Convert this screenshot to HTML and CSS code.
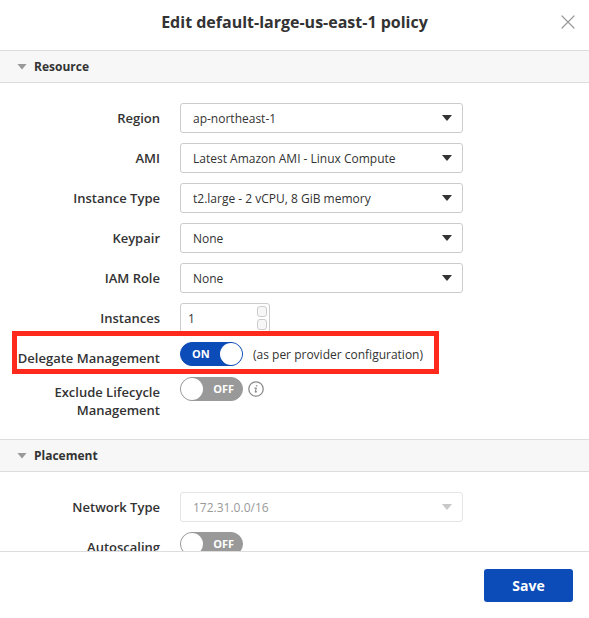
FILE: index.html
```html
<!DOCTYPE html>
<html lang="en">
<head>
<meta charset="utf-8">
<meta name="viewport" content="width=device-width, initial-scale=1">
<title>Edit policy</title>
<link rel="stylesheet" href="styles.css">
</head>
<body>
<form class="dialog">
  <header class="dialog-header">
    <h1 class="dialog-title">Edit default-large-us-east-1 policy</h1>
    <button class="close" type="button" aria-label="Close">
      <svg width="14" height="14" viewBox="0 0 14 14" fill="none" stroke="#999" stroke-width="1.2" stroke-linecap="round"><path d="M1 1l12 12M13 1L1 13"/></svg>
    </button>
  </header>

  <main class="dialog-body">
    <section>
      <h2 class="section-title"><span class="caret"></span>Resource</h2>
      <div class="fields">
        <div class="row">
          <label class="label" for="region">Region</label>
          <div class="select"><select id="region"><option>ap-northeast-1</option></select><span class="arrow"></span></div>
        </div>
        <div class="row">
          <label class="label" for="ami">AMI</label>
          <div class="select"><select id="ami"><option>Latest Amazon AMI - Linux Compute</option></select><span class="arrow"></span></div>
        </div>
        <div class="row">
          <label class="label" for="type">Instance Type</label>
          <div class="select"><select id="type"><option>t2.large - 2 vCPU, 8 GiB memory</option></select><span class="arrow"></span></div>
        </div>
        <div class="row">
          <label class="label" for="keypair">Keypair</label>
          <div class="select"><select id="keypair"><option>None</option></select><span class="arrow"></span></div>
        </div>
        <div class="row">
          <label class="label" for="role">IAM Role</label>
          <div class="select"><select id="role"><option>None</option></select><span class="arrow"></span></div>
        </div>
        <div class="row">
          <label class="label" for="instances">Instances</label>
          <div class="stepper">
            <input id="instances" type="text" inputmode="numeric" value="1">
            <div class="steps">
              <button type="button" aria-label="Increase"></button>
              <button type="button" aria-label="Decrease"></button>
            </div>
          </div>
        </div>
        <div class="row row-highlight">
          <label class="label" for="delegate">Delegate Management</label>
          <div class="control">
            <label class="toggle"><input id="delegate" type="checkbox" checked><span class="state">ON</span></label>
            <span class="note">(as per provider configuration)</span>
          </div>
        </div>
        <div class="row">
          <label class="label" for="lifecycle">Exclude Lifecycle Management</label>
          <div class="control control-tight">
            <label class="toggle"><input id="lifecycle" type="checkbox"><span class="state">OFF</span></label>
            <svg class="info" width="16" height="16" viewBox="0 0 16 16" fill="none" stroke="#8a8a8a" stroke-linecap="round" stroke-linejoin="round"><circle cx="8" cy="8" r="7.2" stroke-width="1.3"/><path d="M6.8 7.1h1.5l-1 3.6c-.1.5.3.6 1.3 0" stroke-width="1.1"/><circle cx="8.7" cy="4.7" r=".8" fill="#8a8a8a" stroke="none"/></svg>
          </div>
        </div>
      </div>
    </section>

    <section>
      <h2 class="section-title"><span class="caret"></span>Placement</h2>
      <div class="fields">
        <div class="row">
          <label class="label" for="network">Network Type</label>
          <div class="select"><select id="network" disabled><option>172.31.0.0/16</option></select><span class="arrow"></span></div>
        </div>
        <div class="row">
          <label class="label" for="autoscaling">Autoscaling</label>
          <div class="control">
            <label class="toggle"><input id="autoscaling" type="checkbox"><span class="state">OFF</span></label>
          </div>
        </div>
      </div>
    </section>
  </main>

  <footer class="dialog-footer">
    <button class="save" type="submit">Save</button>
  </footer>
</form>
</body>
</html>
```

FILE: styles.css
```css
*,
*::before,
*::after {
  box-sizing: border-box;
}

body {
  margin: 0;
  color: #333;
  background: #fff;
  font: 12px/18px "Open Sans", "Noto Sans", sans-serif;
}

button,
input,
select {
  margin: 0;
  color: inherit;
  font: inherit;
}

.dialog {
  display: flex;
  flex-direction: column;
  height: 100vh;
}

.dialog-header {
  display: grid;
  grid-template-columns: 1fr auto 1fr;
  align-items: center;
  flex: none;
  padding: 10px 14px 16px;
}

.dialog-title {
  grid-column: 2;
  margin: 0;
  font-size: 16px;
  line-height: 24px;
  font-weight: 700;
}

.close {
  justify-self: end;
  display: flex;
  padding: 0;
  border: 0;
  background: none;
}

.dialog-body {
  flex: 1;
  min-height: 0;
  overflow-y: auto;
  scrollbar-width: none;
}

.section-title {
  display: flex;
  align-items: center;
  gap: 7px;
  height: 33px;
  margin: 0;
  padding: 0 17px;
  border: solid #ddd;
  border-width: 1px 0;
  background: #f7f7f7;
  font-size: 12px;
  font-weight: 700;
}

.caret,
.arrow {
  width: 10px;
  height: 6px;
  background: #999;
  clip-path: polygon(0 0, 100% 0, 50% 100%);
}

.fields {
  display: flex;
  flex-direction: column;
  gap: 10px;
  padding: 20px 0;
}

.row {
  display: grid;
  grid-template-columns: 143px minmax(0, 283px);
  column-gap: 20px;
  align-items: start;
  padding: 0 17px;
}

.label {
  padding-top: 6px;
  font-size: 13px;
  font-weight: 600;
  text-align: right;
}

.select {
  display: grid;
  align-items: center;
}

.select > * {
  grid-area: 1 / 1;
}

.select select {
  width: 100%;
  height: 30px;
  padding: 2px 32px 0 12px;
  border: 1px solid #ccc;
  border-radius: 3px;
  background: #fff;
  appearance: none;
}

.select select:disabled {
  border-color: #e5e5e5;
  color: #999;
  opacity: 1;
}

.arrow {
  justify-self: end;
  margin-right: 11px;
  background: #333;
  pointer-events: none;
}

select:disabled + .arrow {
  background: #c8c8c8;
}

.stepper {
  display: flex;
  align-items: center;
  width: 90px;
  height: 30px;
  padding: 0 2px 0 7px;
  border: 1px solid #ccc;
  border-radius: 3px;
}

.stepper input {
  flex: 1;
  min-width: 0;
  padding: 2px 0 0;
  border: 0;
  background: none;
}

.steps {
  display: grid;
  gap: 2px;
}

.steps button {
  width: 10px;
  height: 11px;
  padding: 0;
  border: 1px solid #ccc;
  border-radius: 3px;
  background: #f7f7f7;
}

.control {
  display: flex;
  align-items: center;
  gap: 10px;
}

.control-tight {
  gap: 5px;
}

.toggle {
  display: grid;
  align-items: center;
  width: 63px;
  height: 24px;
}

.toggle > * {
  grid-area: 1 / 1;
}

.toggle input {
  display: flex;
  width: 100%;
  height: 100%;
  border: 1px solid #999;
  border-radius: 12px;
  background: #999;
  appearance: none;
}

.toggle input::before {
  content: "";
  width: 22px;
  height: 22px;
  border-radius: 50%;
  background: #fff;
}

.toggle input:checked {
  justify-content: flex-end;
  border-color: #0b4cb8;
  background: #0b4cb8;
}

.state {
  justify-self: end;
  margin-right: 9px;
  color: #fff;
  font-size: 11px;
  font-weight: 700;
  pointer-events: none;
}

input:checked + .state {
  justify-self: start;
  margin-left: 12px;
}

.note {
  padding-top: 2px;
}

.row-highlight {
  position: relative;
  margin-top: -2px;
}

.row-highlight .label {
  padding-top: 8px;
}

.row-highlight .control {
  padding-top: 1px;
}

.row-highlight::after {
  content: "";
  position: absolute;
  inset: -10px auto -7px 12px;
  width: 427px;
  border: 5px solid #ff2a1c;
  pointer-events: none;
}

.dialog-footer {
  display: flex;
  justify-content: flex-end;
  flex: none;
  padding: 17px 16px 16px;
  border-top: 1px solid #ddd;
}

.save {
  width: 89px;
  height: 33px;
  padding: 0;
  border: 0;
  border-radius: 3px;
  color: #fff;
  background: #0b4cb8;
  font-size: 14px;
  font-weight: 700;
}
```
